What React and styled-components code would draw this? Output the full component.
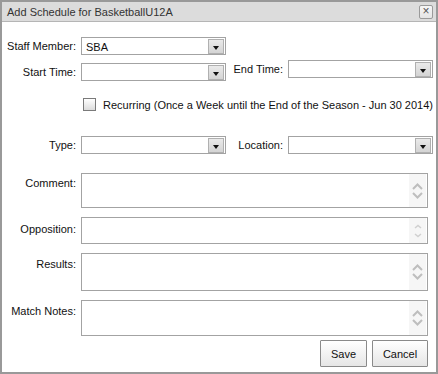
import styled, { createGlobalStyle } from "styled-components";

const GlobalStyle = createGlobalStyle`
  html, body {
    margin: 0;
    padding: 0;
    background: #ffffff;
  }
  body {
    font-family: "Liberation Sans", Arial, sans-serif;
    font-size: 11px;
    color: #222;
  }
`;

const Dialog = styled.div`
  width: 438px;
  height: 374px;
  box-sizing: border-box;
  border: 2px solid #999;
  background: #fff;
  display: flex;
  flex-direction: column;
`;

const TitleBar = styled.div`
  height: 19px;
  border-bottom: 1px solid #b5b5b5;
  background: #dcdcdc;
  display: flex;
  align-items: center;
  justify-content: space-between;
  padding: 0 3px 0 5px;
`;

const Title = styled.span`
  font-size: 11px;
  color: #333;
`;

const CloseButton = styled.div`
  width: 12px;
  height: 12px;
  border: 1px solid #9a9a9a;
  border-radius: 2px;
  background: linear-gradient(#f6f6f6, #e4e4e4);
  color: #555;
  font-size: 12px;
  line-height: 11px;
  text-align: center;
  margin-top: 1px;
`;

const Body = styled.div`
  display: flex;
  flex-direction: column;
  padding: 15px 0 0 2px;
`;

const Row = styled.div`
  display: flex;
  align-items: ${(p) => p.$align || "center"};
  margin-top: ${(p) => p.$top || 0}px;
`;

const Field = styled.div`
  display: flex;
  align-items: ${(p) => p.$align || "center"};
  margin-top: ${(p) => p.$shift || 0}px;
`;

const Label = styled.label`
  width: ${(p) => p.$width || 72}px;
  text-align: right;
  margin-right: 5px;
  white-space: nowrap;
  padding-top: ${(p) => p.$pad || 0}px;
  color: #111;
`;

const SelectBox = styled.div`
  width: 145px;
  height: 18px;
  box-sizing: border-box;
  border: 1px solid #a3a3a3;
  background: #fff;
  display: flex;
  align-items: stretch;
`;

const SelectValue = styled.span`
  flex: 1;
  padding-left: 4px;
  display: flex;
  align-items: center;
  padding-top: 1px;
  color: #111;
`;

const ArrowButton = styled.span`
  width: 16px;
  box-sizing: border-box;
  margin: 1px 1px 0 0;
  border: 1px solid #b0b0b0;
  background: linear-gradient(#eaeaea, #d4d4d4);
  display: flex;
  align-items: center;
  justify-content: center;
  padding-top: 3px;

  &::after {
    content: "";
    width: 0;
    height: 0;
    border-left: 3.5px solid transparent;
    border-right: 3.5px solid transparent;
    border-top: 4px solid #111;
  }
`;

const Select = ({ value }) => (
  <SelectBox>
    <SelectValue>{value}</SelectValue>
    <ArrowButton />
  </SelectBox>
);

const Checkbox = styled.span`
  width: 13px;
  height: 13px;
  box-sizing: border-box;
  border: 1px solid #7a7a7a;
  background: linear-gradient(#ffffff, #dcdcdc);
  margin-left: 2px;
  margin-right: 7px;
`;

const Check = styled.div`
  display: flex;
  align-items: center;
  color: #111;
`;

const TextBox = styled.div`
  width: 347px;
  height: ${(p) => p.$height}px;
  box-sizing: border-box;
  border: 1px solid #a3a3a3;
  background: #fff;
  display: flex;
`;

const TextArea = styled.div`
  flex: 1;
`;

const ScrollRail = styled.div`
  width: 17px;
  background: #f6f6f6;
  display: flex;
  flex-direction: column;
  align-items: center;
  justify-content: center;
  gap: ${(p) => (p.$small ? 4 : 2)}px;
  margin-right: 1px;
`;

const Chevron = ({ down, small }) => {
  const w = small ? 8 : 11;
  const h = small ? 5 : 7;
  const pts = down
    ? `1,1 ${w / 2},${h - 1.5} ${w - 1},1`
    : `1,${h - 1} ${w / 2},1.5 ${w - 1},${h - 1}`;
  return (
    <svg width={w} height={h} viewBox={`0 0 ${w} ${h}`}>
      <polyline
        points={pts}
        fill="none"
        stroke={small ? "#d0d0d0" : "#bebebe"}
        strokeWidth={small ? 1.5 : 2}
      />
    </svg>
  );
};

const MultiLine = ({ height, small }) => (
  <TextBox $height={height}>
    <TextArea />
    <ScrollRail $small={small}>
      <Chevron small={small} />
      <Chevron small={small} down />
    </ScrollRail>
  </TextBox>
);

const ButtonRow = styled.div`
  display: flex;
  justify-content: flex-end;
  gap: 5px;
  margin-top: 4px;
  padding-right: 8px;
`;

const Button = styled.button`
  width: ${(p) => p.$width}px;
  height: 27px;
  box-sizing: border-box;
  border: 1px solid #8a8a8a;
  border-radius: 1px;
  background: linear-gradient(#ffffff, #e6e6e6);
  font-family: "Liberation Sans", Arial, sans-serif;
  font-size: 11px;
  color: #111;
  padding: 0;
`;

export default function App() {
  return (
    <>
      <GlobalStyle />
      <Dialog>
        <TitleBar>
          <Title>Add Schedule for BasketballU12A</Title>
          <CloseButton>×</CloseButton>
        </TitleBar>
        <Body>
          <Row>
            <Label>Staff Member:</Label>
            <Select value="SBA" />
          </Row>
          <Row $top={5} $align="flex-start">
            <Field $shift={3}>
              <Label>Start Time:</Label>
              <Select />
            </Field>
            <Field>
              <Label $width={57}>End Time:</Label>
              <Select />
            </Field>
          </Row>
          <Row $top={17}>
            <Label />
            <Check>
              <Checkbox />
              <span>Recurring (Once a Week until the End of the Season - Jun 30 2014)</span>
            </Check>
          </Row>
          <Row $top={25}>
            <Label>Type:</Label>
            <Select />
            <Label $width={57}>Location:</Label>
            <Select />
          </Row>
          <Row $top={19} $align="flex-start">
            <Label $pad={4}>Comment:</Label>
            <MultiLine height={35} />
          </Row>
          <Row $top={9} $align="flex-start">
            <Label $pad={6}>Opposition:</Label>
            <MultiLine height={27} small />
          </Row>
          <Row $top={9} $align="flex-start">
            <Label $pad={5}>Results:</Label>
            <MultiLine height={38} />
          </Row>
          <Row $top={9} $align="flex-start">
            <Label $pad={5}>Match Notes:</Label>
            <MultiLine height={36} />
          </Row>
          <ButtonRow>
            <Button $width={47}>Save</Button>
            <Button $width={56}>Cancel</Button>
          </ButtonRow>
        </Body>
      </Dialog>
    </>
  );
}
